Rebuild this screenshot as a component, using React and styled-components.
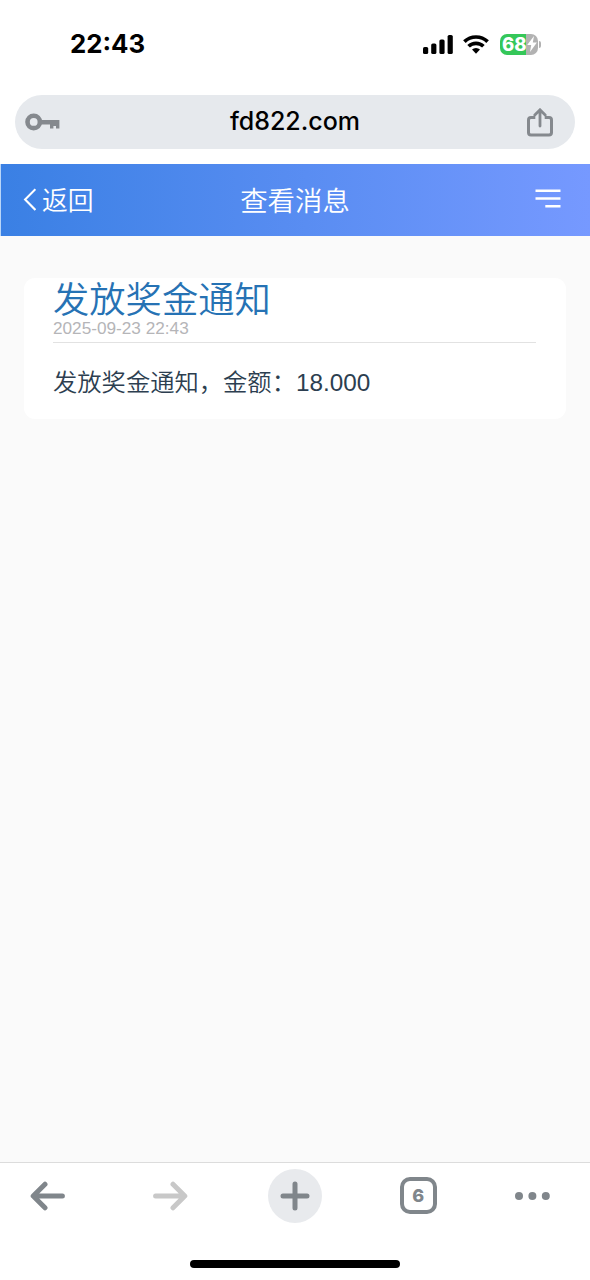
import React from "react";
import styled, { createGlobalStyle } from "styled-components";

const GlobalStyle = createGlobalStyle`
    * {
        box-sizing: border-box;
    }
    body {
        margin: 0;
        background-color: #ffffff;
    }
    svg {
        display: block;
        flex: none;
    }
    button {
        padding: 0;
        border: 0;
        background: none;
        font: inherit;
        color: inherit;
    }
    h1, h2, p {
        margin: 0;
        font-weight: 400;
    }
`;

const Screen = styled.div`
    display: flex;
    flex-direction: column;
    width: 590px;
    height: 1280px;
    overflow: hidden;
    font-family: "Liberation Sans", "Noto Sans CJK SC", sans-serif;
`;

const StatusBar = styled.div`
    display: flex;
    align-items: center;
    justify-content: space-between;
    flex: none;
    height: 95px;
    padding: 0 49px 7px 70px;
`;
const Clock = styled.span`
    font-family: Inter, sans-serif;
    font-size: 25.8px;
    font-weight: 700;
    line-height: 30px;
    color: #000000;
`;
const StatusIcons = styled.div`
    display: flex;
    align-items: center;
    gap: 10px;
`;
const BatteryGroup = styled.div`
    display: flex;
    align-items: center;
    gap: 1px;
    padding-left: 1px;
`;
const Battery = styled.div`
    display: flex;
    align-items: center;
    width: 38px;
    height: 21px;
    padding-left: 2px;
    border-radius: 7px;
    background: linear-gradient(90deg, #35c759 68%, #b2b2b2 68%);
    font-family: Inter, sans-serif;
    font-size: 18.5px;
    font-weight: 800;
    line-height: 21px;
    color: #ffffff;
`;
const BatteryCap = styled.div`
    width: 2px;
    height: 7px;
    border-radius: 0 2px 2px 0;
    background-color: #b2b2b2;
`;

const AddressBar = styled.div`
    display: grid;
    grid-template-columns: 1fr auto 1fr;
    align-items: center;
    flex: none;
    height: 54px;
    margin: 0 15px 15px;
    padding: 0 22px 0 10px;
    border-radius: 27px;
    background-color: #e6e9ed;
`;
const Host = styled.span`
    padding: 0 0 3px 12px;
    font-family: Inter, sans-serif;
    font-size: 25px;
    font-weight: 500;
    line-height: 30px;
    color: #000000;
`;
const ShareButton = styled.button`
    justify-self: end;
`;

const Header = styled.header`
    display: grid;
    grid-template-columns: 1fr auto 1fr;
    align-items: center;
    flex: none;
    height: 72px;
    padding: 0 29px 0 22px;
    border-left: 1px solid #b9d6f8;
    background: linear-gradient(90deg, #3a80e4, #7699ff);
    color: #ffffff;
    font-weight: 350;
`;
const BackButton = styled.button`
    display: flex;
    align-items: center;
    gap: 6px;
    font-size: 25.8px;
    line-height: 36px;
`;
const BackLabel = styled.span`
    padding-top: 2px;
`;
const HeaderTitle = styled.h1`
    padding: 3px 0 0 6px;
    font-size: 27.4px;
    font-weight: 350;
    line-height: 40px;
`;
const MenuButton = styled.button`
    justify-self: end;
    padding-bottom: 2px;
`;

const Content = styled.main`
    flex: 1;
    padding: 42px 24px 0;
    background-color: #fafafa;
`;
const Card = styled.article`
    height: 141px;
    padding: 0 30px 0 29px;
    border-radius: 11px;
    background-color: #ffffff;
`;
const CardHead = styled.div`
    height: 65px;
    padding-top: 4px;
    border-bottom: 1px solid #e2e2e2;
`;
const CardTitle = styled.h2`
    font-size: 36.3px;
    font-weight: 350;
    line-height: 37px;
    color: #2672b4;
`;
const CardDate = styled.p`
    font-size: 17.2px;
    line-height: 18px;
    color: #b5b5b8;
`;
const Message = styled.p`
    padding-top: 22px;
    font-size: 24.3px;
    font-weight: 350;
    line-height: 36px;
    color: #2c3e50;
`;

const Toolbar = styled.nav`
    display: flex;
    align-items: center;
    justify-content: space-between;
    flex: none;
    height: 67px;
    padding: 0 21px 1px 20px;
    border-top: 1px solid #dcdcdc;
`;
const ToolButton = styled.button`
    display: flex;
    align-items: center;
    justify-content: center;
    width: 54px;
    height: 54px;
    border-radius: 50%;
    background-color: ${(props) => (props.$filled ? "#e8eaed" : "transparent")};
    color: ${(props) => (props.$disabled ? "#c8c8c8" : "#80868b")};
    &:last-child {
        padding-right: 20px;
    }
`;
const TabCount = styled.span`
    display: flex;
    align-items: center;
    justify-content: center;
    width: 37px;
    height: 37px;
    border: 4px solid #80868b;
    border-radius: 10px;
    font-family: Inter, sans-serif;
    font-size: 18px;
    font-weight: 800;
    line-height: 20px;
`;
const HomeArea = styled.div`
    display: flex;
    justify-content: center;
    height: 51px;
    padding-top: 31px;
`;
const HomeIndicator = styled.div`
    width: 210px;
    height: 8px;
    border-radius: 4px;
    background-color: #000000;
`;

const SignalIcon = () => (
    <svg width="30" height="19" viewBox="0 0 30 19">
        <rect x="0" y="12" width="5.2" height="7" rx="1.6" />
        <rect x="8.2" y="8.5" width="5.2" height="10.5" rx="1.6" />
        <rect x="16.4" y="4.5" width="5.2" height="14.5" rx="1.6" />
        <rect x="24.6" y="0" width="5.2" height="19" rx="1.6" />
    </svg>
);

const WifiIcon = () => (
    <svg
        width="26"
        height="19"
        viewBox="0 0 26 19"
        fill="none"
        stroke="#000"
        strokeWidth="3.7"
    >
        <path d="M1.4 6.7a16.7 16.7 0 0 1 23.2 0" />
        <path d="M5.6 11.3a10.6 10.6 0 0 1 14.8 0" />
        <path
            d="M9 14.6a5.8 5.8 0 0 1 8 0L13 18.7z"
            fill="#000"
            stroke="none"
        />
    </svg>
);

const BoltIcon = () => (
    <svg width="10" height="16" viewBox="0 0 10 16" fill="#fff">
        <path d="M7 0 0.2 9h4L3 16 9.9 6.6H5.8z" />
    </svg>
);

const KeyIcon = () => (
    <svg width="36" height="18" viewBox="0 0 36 18" fill="none" stroke="#85898e">
        <circle cx="8.7" cy="8.9" r="6.2" strokeWidth="4.6" />
        <path
            d="M15.5 7H34.4V15.6H31V13H28.4V15.6H25V11.4H15.5z"
            fill="#85898e"
            stroke="none"
        />
    </svg>
);

const ShareIcon = () => (
    <svg
        width="26"
        height="29"
        viewBox="0 0 26 29"
        fill="none"
        stroke="#85898e"
        strokeWidth="3"
    >
        <path d="M8.3 9.5H4A2.5 2.5 0 0 0 1.5 12v12.5A2.5 2.5 0 0 0 4 27h18a2.5 2.5 0 0 0 2.5-2.5V12A2.5 2.5 0 0 0 22 9.5h-4.3" />
        <path
            d="M13 18V2.2M7.8 7 13 1.8 18.2 7"
            strokeWidth="2.8"
            strokeLinecap="round"
        />
    </svg>
);

const ChevronIcon = () => (
    <svg
        width="13"
        height="24"
        viewBox="0 0 13 24"
        fill="none"
        stroke="#fff"
        strokeWidth="2.1"
    >
        <path d="M12.4 1.2 2.1 11.6 12.4 22" />
    </svg>
);

const MenuIcon = () => (
    <svg width="26" height="22" viewBox="0 0 26 22" stroke="#fff" strokeWidth="2.5">
        <path d="M0.5 2.8h25M0.5 10.4h25M10.3 18.2h15.2" />
    </svg>
);

const ArrowIcon = ({ flip }) => (
    <svg
        width="35"
        height="30"
        viewBox="0 0 35 30"
        fill="none"
        stroke="currentColor"
        strokeWidth="5"
        strokeLinecap="round"
        strokeLinejoin="round"
    >
        <path
            d={
                flip
                    ? "M2.6 15H31.5M20 3.2 31.8 15 20 26.8"
                    : "M32.4 15H3.5M15 3.2 3.2 15 15 26.8"
            }
        />
    </svg>
);

const PlusIcon = () => (
    <svg
        width="30"
        height="30"
        viewBox="0 0 30 30"
        stroke="currentColor"
        strokeWidth="5"
        strokeLinecap="round"
    >
        <path d="M15 3v24M3 15h24" />
    </svg>
);

const DotsIcon = () => (
    <svg width="35" height="8" viewBox="0 0 35 8" fill="currentColor">
        <circle cx="4" cy="4" r="4" />
        <circle cx="17.4" cy="4" r="4" />
        <circle cx="30.8" cy="4" r="4" />
    </svg>
);

const message = {
    title: "发放奖金通知",
    date: "2025-09-23 22:43",
    text: "发放奖金通知，金额：18.000",
};

const App = () => {
    return (
        <>
            <GlobalStyle />
            <Screen>
                <StatusBar>
                    <Clock>22:43</Clock>
                    <StatusIcons>
                        <SignalIcon />
                        <WifiIcon />
                        <BatteryGroup>
                            <Battery>
                                68
                                <BoltIcon />
                            </Battery>
                            <BatteryCap />
                        </BatteryGroup>
                    </StatusIcons>
                </StatusBar>
                <AddressBar>
                    <KeyIcon />
                    <Host>fd822.com</Host>
                    <ShareButton>
                        <ShareIcon />
                    </ShareButton>
                </AddressBar>
                <Header>
                    <BackButton>
                        <ChevronIcon />
                        <BackLabel>返回</BackLabel>
                    </BackButton>
                    <HeaderTitle>查看消息</HeaderTitle>
                    <MenuButton>
                        <MenuIcon />
                    </MenuButton>
                </Header>
                <Content>
                    <Card>
                        <CardHead>
                            <CardTitle>{message.title}</CardTitle>
                            <CardDate>{message.date}</CardDate>
                        </CardHead>
                        <Message>{message.text}</Message>
                    </Card>
                </Content>
                <Toolbar>
                    <ToolButton>
                        <ArrowIcon />
                    </ToolButton>
                    <ToolButton $disabled>
                        <ArrowIcon flip />
                    </ToolButton>
                    <ToolButton $filled>
                        <PlusIcon />
                    </ToolButton>
                    <ToolButton>
                        <TabCount>6</TabCount>
                    </ToolButton>
                    <ToolButton>
                        <DotsIcon />
                    </ToolButton>
                </Toolbar>
                <HomeArea>
                    <HomeIndicator />
                </HomeArea>
            </Screen>
        </>
    );
};

export default App;
